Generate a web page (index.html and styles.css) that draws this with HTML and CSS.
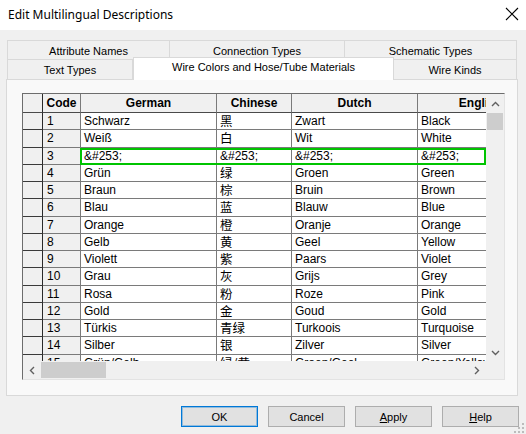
FILE: index.html
```html
<!DOCTYPE html>
<html lang="en">
<head>
  <meta charset="UTF-8">
  <title>Edit Multilingual Descriptions</title>
  <link rel="stylesheet" href="styles.css">
</head>
<body>
  <div class="dialog">
    <div class="titlebar">
      <span class="title">Edit Multilingual Descriptions</span>
      <svg class="close" width="14" height="14" viewBox="0 0 14 14">
        <path d="M1 1 L13 13 M13 1 L1 13" stroke="#000" stroke-width="1.1" fill="none"/>
      </svg>
    </div>

    <div class="client">
      <div class="tabs">
        <div class="tab-row top">
          <div class="tab t-attr">Attribute Names</div>
          <div class="tab t-conn">Connection Types</div>
          <div class="tab t-schem">Schematic Types</div>
        </div>
        <div class="tab-row bottom">
          <div class="tab t-text">Text Types</div>
          <div class="tab t-wire selected">Wire Colors and Hose/Tube Materials</div>
          <div class="tab t-kinds">Wire Kinds</div>
        </div>
      </div>

      <div class="panel">
        <div class="grid">
          <div class="grid-main">
            <div class="viewport">
              <div class="row head">
                <span class="ind"></span><span class="code">Code</span><span>German</span><span>Chinese</span><span>Dutch</span><span>English</span>
              </div>
              <div class="row"><span class="ind"></span><span class="code">1</span><span>Schwarz</span><span class="zh">黑</span><span>Zwart</span><span>Black</span></div>
              <div class="row"><span class="ind"></span><span class="code">2</span><span>Weiß</span><span class="zh">白</span><span>Wit</span><span>White</span></div>
              <div class="row"><span class="ind"></span><span class="code">3</span><span>&amp;#253;</span><span>&amp;#253;</span><span>&amp;#253;</span><span>&amp;#253;</span></div>
              <div class="row"><span class="ind"></span><span class="code">4</span><span>Grün</span><span class="zh">绿</span><span>Groen</span><span>Green</span></div>
              <div class="row"><span class="ind"></span><span class="code">5</span><span>Braun</span><span class="zh">棕</span><span>Bruin</span><span>Brown</span></div>
              <div class="row"><span class="ind"></span><span class="code">6</span><span>Blau</span><span class="zh">蓝</span><span>Blauw</span><span>Blue</span></div>
              <div class="row"><span class="ind"></span><span class="code">7</span><span>Orange</span><span class="zh">橙</span><span>Oranje</span><span>Orange</span></div>
              <div class="row"><span class="ind"></span><span class="code">8</span><span>Gelb</span><span class="zh">黄</span><span>Geel</span><span>Yellow</span></div>
              <div class="row"><span class="ind"></span><span class="code">9</span><span>Violett</span><span class="zh">紫</span><span>Paars</span><span>Violet</span></div>
              <div class="row"><span class="ind"></span><span class="code">10</span><span>Grau</span><span class="zh">灰</span><span>Grijs</span><span>Grey</span></div>
              <div class="row"><span class="ind"></span><span class="code">11</span><span>Rosa</span><span class="zh">粉</span><span>Roze</span><span>Pink</span></div>
              <div class="row"><span class="ind"></span><span class="code">12</span><span>Gold</span><span class="zh">金</span><span>Goud</span><span>Gold</span></div>
              <div class="row"><span class="ind"></span><span class="code">13</span><span>Türkis</span><span class="zh">青绿</span><span>Turkoois</span><span>Turquoise</span></div>
              <div class="row"><span class="ind"></span><span class="code">14</span><span>Silber</span><span class="zh">银</span><span>Zilver</span><span>Silver</span></div>
              <div class="row"><span class="ind"></span><span class="code">15</span><span>Grün/Gelb</span><span class="zh">绿/黄</span><span>Groen/Geel</span><span>Green/Yellow</span></div>
              <div class="selection"></div>
            </div>
            <div class="vscroll">
              <div class="arrow up">
                <svg width="9" height="6" viewBox="0 0 9 6"><polyline points="1,5 4.5,1.5 8,5" fill="none" stroke="#606060" stroke-width="1.4"/></svg>
              </div>
              <div class="thumb"></div>
              <div class="track"></div>
              <div class="arrow down">
                <svg width="9" height="6" viewBox="0 0 9 6"><polyline points="1,1 4.5,4.5 8,1" fill="none" stroke="#606060" stroke-width="1.4"/></svg>
              </div>
            </div>
          </div>
          <div class="hscroll">
            <div class="arrow left">
              <svg width="6" height="9" viewBox="0 0 6 9"><polyline points="5,1 1.5,4.5 5,8" fill="none" stroke="#606060" stroke-width="1.4"/></svg>
            </div>
            <div class="thumb"></div>
            <div class="track"></div>
            <div class="arrow right">
              <svg width="6" height="9" viewBox="0 0 6 9"><polyline points="1,1 4.5,4.5 1,8" fill="none" stroke="#606060" stroke-width="1.4"/></svg>
            </div>
            <div class="corner"></div>
          </div>
        </div>
      </div>

      <div class="buttons">
        <button class="btn default">OK</button>
        <button class="btn">Cancel</button>
        <button class="btn"><u>A</u>pply</button>
        <button class="btn"><u>H</u>elp</button>
      </div>
    </div>

    <svg class="grip" width="11" height="11" viewBox="0 0 11 11">
      <rect x="8" y="0" width="2" height="2" fill="#bcbcbc"/>
      <rect x="4" y="4" width="2" height="2" fill="#bcbcbc"/>
      <rect x="8" y="4" width="2" height="2" fill="#bcbcbc"/>
      <rect x="0" y="8" width="2" height="2" fill="#bcbcbc"/>
      <rect x="4" y="8" width="2" height="2" fill="#bcbcbc"/>
      <rect x="8" y="8" width="2" height="2" fill="#bcbcbc"/>
    </svg>
  </div>
</body>
</html>
```

FILE: styles.css
```css
* {
  box-sizing: border-box;
}
body {
  margin: 0;
  background: #f0f0f0;
  font-family: "Liberation Sans", Arial, "Noto Sans CJK SC", sans-serif;
  color: #000;
}
.dialog {
  position: relative;
  width: 526px;
  height: 434px;
  overflow: hidden;
  background: #f0f0f0;
}
.titlebar {
  height: 30px;
  background: #fff;
  display: flex;
  align-items: center;
  justify-content: space-between;
  padding: 0 7px 2px 8px;
}
.title {
  font-family: "Noto Sans", "Liberation Sans", sans-serif;
  font-size: 12px;
}
.client {
  padding: 10px 8px 0 6px;
}

/* tabs */
.tabs {
  margin: 0 1px;
}
.tab-row {
  display: flex;
}
.tab-row.top {
  height: 19px;
}
.tab-row.bottom {
  height: 20px;
}
.tab {
  font-size: 11px;
  text-align: center;
  border: 1px solid #d9d9d9;
  border-bottom: none;
  background: #f0f0f0;
  padding-top: 4px;
  white-space: nowrap;
}
.tab + .tab {
  border-left: none;
}
.t-attr { width: 163px; }
.t-conn { width: 175px; }
.t-schem { width: 172px; }
.t-text { width: 126px; }
.t-wire { width: 261px; }
.t-kinds { width: 123px; }
.tab.selected {
  position: relative;
  z-index: 1;
  background: #fff;
  height: 23px;
  margin-top: -2px;
  margin-bottom: -1px;
  border-left: 1px solid #d9d9d9;
  padding-top: 3px;
}

.panel {
  background: #f9f9f9;
  border: 1px solid #d9d9d9;
  height: 317px;
  padding: 13px 12px 0 15px;
}

/* grid */
.grid {
  width: 483px;
  height: 287px;
  border-top: 1px solid #6d6d6d;
  border-left: 1px solid #6d6d6d;
  border-right: 1px solid #e3e3e3;
  border-bottom: 1px solid #e3e3e3;
  display: flex;
  flex-direction: column;
}
.grid-main {
  display: flex;
  height: 267px;
}
.viewport {
  position: relative;
  width: 463px;
  overflow: hidden;
  background: #fff;
}
.row {
  display: grid;
  grid-template-columns: 20px 38px 136px 75px 126px 126px;
  width: 521px;
  height: 17.25px;
  font-size: 12px;
}
.row > span {
  border-right: 1px solid #7a7a7a;
  border-bottom: 1px solid #7a7a7a;
  padding: 1px 0 0 3px;
  line-height: 15px;
  white-space: nowrap;
  overflow: hidden;
}
.row > .ind {
  background: #f0f0f0;
  border-right-color: #2a2a2a;
  border-bottom-color: #3a3a3a;
}
.row > .code {
  background: #f0f0f0;
  padding-left: 4px;
}
.row > .zh {
  font-family: "Noto Sans CJK SC", sans-serif;
  font-size: 12.5px;
  line-height: 15px;
  padding-top: 0;
  overflow: visible;
}
.row.head {
  height: 19px;
}
.row.head > span {
  background: #f0f0f0;
  font-weight: bold;
  text-align: center;
  padding: 1px 0 0 0;
  line-height: 17px;
  border-bottom-color: #4a4a4a;
}
.selection {
  position: absolute;
  left: 57px;
  top: 53.5px;
  width: 406px;
  height: 17.75px;
  border: 2px solid #00c400;
}

/* scrollbars */
.vscroll {
  width: 18px;
  background: #f0f0f0;
  display: flex;
  flex-direction: column;
}
.vscroll .arrow {
  display: flex;
  align-items: center;
  justify-content: center;
}
.vscroll .up {
  height: 19px;
}
.vscroll .down {
  height: 17px;
}
.vscroll .thumb {
  height: 17px;
  margin: 0 1px 0 1px;
  background: #cdcdcd;
}
.vscroll .track {
  flex: 1;
}
.hscroll {
  height: 18px;
  background: #f0f0f0;
  display: flex;
}
.hscroll .arrow {
  width: 18px;
  display: flex;
  align-items: center;
  justify-content: center;
}
.hscroll .thumb {
  width: 65px;
  margin: 1px 0;
  background: #cdcdcd;
}
.hscroll .track {
  flex: 1;
}
.hscroll .corner {
  width: 18px;
  background: #f0f0f0;
}

/* buttons */
.buttons {
  display: flex;
  justify-content: flex-end;
  gap: 10px;
  margin-top: 10px;
  margin-right: -1px;
}
.btn {
  width: 77px;
  height: 21px;
  background: #e1e1e1;
  border: 1px solid #adadad;
  font-family: "Liberation Sans", Arial, sans-serif;
  font-size: 11px;
  color: #000;
  padding: 0;
}
.btn.default {
  border-color: #0078d7;
  box-shadow: inset 0 0 0 1px rgba(0, 120, 215, 0.35);
}
.grip {
  position: absolute;
  right: 1px;
  bottom: 0;
}
```
